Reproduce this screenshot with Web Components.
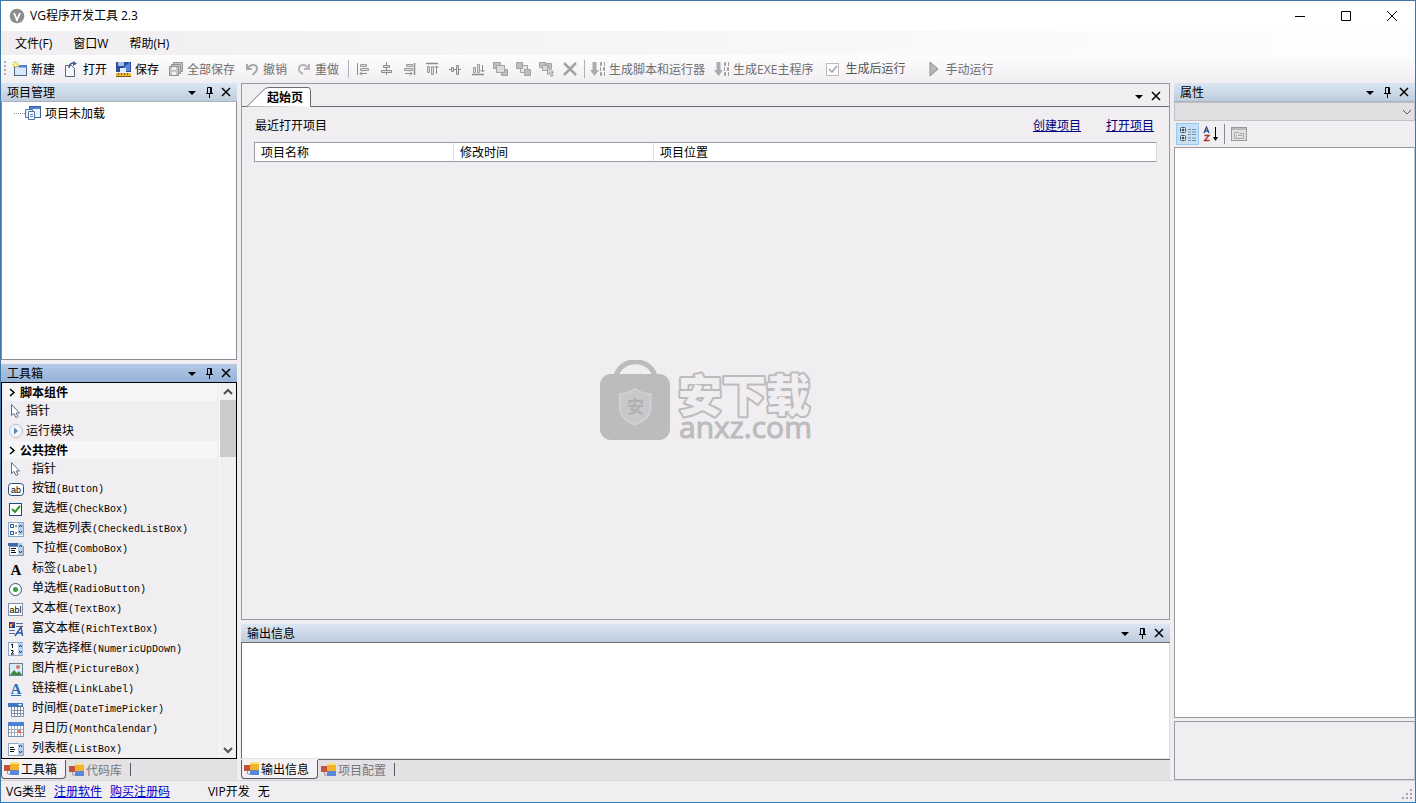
<!DOCTYPE html>
<html lang="zh-CN">
<head>
<meta charset="utf-8">
<title>VG程序开发工具 2.3</title>
<style>
  html, body { margin: 0; height: 100%; }
  body {
    font: 12px/16px "Open Sans", "Noto Sans CJK SC", sans-serif;
    color: #000; background: #f0eef1; overflow: hidden;
  }
</style>
</head>
<body>
<ide-window></ide-window>
<script>
// Shared reset that every shadow root starts from.
const BASE = `<style>
  *, :host { box-sizing: border-box; }
  button { font: inherit; color: inherit; background: none; border: 0; padding: 0; margin: 0; display: flex; align-items: center; white-space: nowrap; }
  a { color: #00007f; }
  ul { list-style: none; margin: 0; padding: 0; }
</style>`;

function define(name, markup) {
  customElements.define(name, class extends HTMLElement {
    constructor() {
      super();
      this.attachShadow({ mode: 'open' });
    }
    connectedCallback() {
      if (this.shadowRoot.childNodes.length) return;
      const template = document.createElement('template');
      template.innerHTML = BASE + (typeof markup === 'function' ? markup(this) : markup);
      this.shadowRoot.append(template.content.cloneNode(true));
    }
  });
}

// Icons, each drawn on a 16 x 16 grid.
const spin = '<rect x="10" y="2" width="5" height="12" fill="#b9cdec"/><path d="M11 6l1.5-2L14 6M11 10l1.5 2L14 10" fill="none" stroke="#1c3a66"/>';
const ICONS = {
  logo: '<circle cx="8" cy="8" r="7.3" fill="#8d8d8d"/><path d="M5 5l3 7 3-7" fill="none" stroke="#fff" stroke-width="1.8"/>',
  'new': '<rect x="2.500" y="5.500" width="12" height="9" fill="#dbe8fa" stroke="#4a6487"/><rect x="7" y="4" width="8" height="2.500" fill="#4c82d6"/><path d="M3.500 0v7M0 3.500h7M1 1l5 5M6 1L1 6" stroke="#f1cf3a" stroke-width="1.2"/><circle cx="3.500" cy="3.500" r="1.500" fill="#fff6b8"/>',
  open: '<path d="M1.500 4.500h6l3 3v8h-9z" fill="#f4f8fd" stroke="#56677f"/><path d="M5 7c0-4 2-5 5-5" fill="none" stroke="#41618f" stroke-width="1.500"/><path d="M9 0l4 2.500L9 5z" fill="#41618f"/>',
  save: '<rect x="0" y="1" width="15" height="10" fill="#274c9c"/><path d="M2 1h6v4H2z" fill="#9fc0ec"/><path d="M8 6l6-5v9H6z" fill="#5b86d8"/><path d="M4 7h6v4H4z" fill="#dfe8f6"/><rect x="0" y="12" width="15" height="3.500" fill="#e9b83a"/><path d="M2.500 12v2M5.500 12v2M8.500 12v2M11.500 12v2M0 15.500h15" stroke="#80600e"/>',
  saveall: '<g fill="#c6c5c7" stroke="#929193"><path d="M5.500 1.500h9v9h-9z"/><path d="M3.500 3.500h9v9h-9z"/><path d="M1.500 5.500h9v9h-9z"/></g><path d="M4 6h4v3H4zM4 11h4v3H4z" fill="#efeff0"/>',
  undo: '<path d="M3 3v5h5M3.500 7.500C6 3 12 3 13 6.500 13.500 9.500 11 12 8.500 14" fill="none" stroke="#a9a8aa" stroke-width="2"/>',
  redo: '<path d="M13 3v5H8M12.500 7.500C10 3 4 3 3 7c-.5 3 2 5 4 6" fill="none" stroke="#b5b4b6" stroke-width="2"/>',
  aleft: '<path d="M2.500 2v12" stroke="#8b8a8c"/><path d="M5.500 3.500h6v2h-6zM5.500 7.500h8v2h-8z" fill="#dedde0" stroke="#9b9a9c"/><path d="M12 12.500H5M7 10.500l-2 2 2 2" fill="none" stroke="#8b8a8c"/>',
  acenter: '<path d="M8.500 1v13" stroke="#8b8a8c"/><path d="M5.500 4.500h6v2h-6zM3.500 9.500h10v2h-10z" fill="#dedde0" stroke="#8b8a8c"/>',
  aright: '<path d="M13.500 2v12" stroke="#8b8a8c" stroke-width="1.500"/><path d="M5.500 3.500h6v2h-6zM3.500 7.500h8v2h-8z" fill="#dedde0" stroke="#9b9a9c"/><path d="M4 12.500h7M9 10.500l2 2-2 2" fill="none" stroke="#8b8a8c"/>',
  atop: '<path d="M2 2.500h12" stroke="#8b8a8c" stroke-width="1.500"/><path d="M3.500 5.500h2v6h-2zM7.500 5.500h2v8h-2z" fill="#dedde0" stroke="#9b9a9c"/><path d="M12.500 13V5M10.500 7l2-2 2 2" fill="none" stroke="#8b8a8c"/>',
  amiddle: '<path d="M2 8.500h12" stroke="#8b8a8c"/><path d="M4.500 6.500h2v4h-2zM9.500 4.500h2v9h-2z" fill="#dedde0" stroke="#8b8a8c"/>',
  abottom: '<path d="M2 13.500h12" stroke="#8b8a8c" stroke-width="1.500"/><path d="M3.500 6.500h2v5h-2zM7.500 3.500h2v8h-2z" fill="#dedde0" stroke="#9b9a9c"/><path d="M12.500 4v7M10.500 9l2 2 2-2" fill="none" stroke="#8b8a8c"/>',
  front: '<g stroke="#a3a2a4"><path d="M.5 1.500h7v6h-7zM8.500 8.500h6v6h-6z" fill="#bebdbf"/><path d="M3.500 4.500h8v7h-8z" fill="#dcdbdd"/></g>',
  back: '<g stroke="#a3a2a4"><path d="M4.500 4.500h7v7h-7z" fill="#e4e3e5"/><path d="M.5 1.500h6v6h-6zM8.500 8.500h6v6h-6z" fill="#bdbcbe"/></g>',
  pick: '<g stroke="#a3a2a4"><path d="M.5 1.500h6v5h-6zM7.500 2.500h5v5h-5z" fill="#c3c2c4"/><path d="M3.500 4.500h6v5h-6z" fill="#dcdbdd"/><path d="M8.500 5.500v8l2-1.500 1.500 3.500 2-1-1.500-3H15z" fill="#d3d2d4"/></g>',
  del: '<path d="M2 2l12 12M14 2L2 14" stroke="#a3a2a4" stroke-width="2.500"/>',
  build: '<path d="M2.500 1h4v8H9l-4.500 6L0 9h2.500z" fill="#acabad"/><g fill="none" stroke="#9d9c9e"><path d="M10.500 1.500h1v3h-1zM14.500 1v4M10.500 6v4M13.500 6.500h1v3h-1zM10.500 11.500h1v3h-1zM14.500 11v4"/></g>',
  play: '<path d="M4 1l8 7-8 7z" fill="#b7b6b8" stroke="#8d8c8e"/>',
  check: '<path d="M3 6l3 3 5-6" fill="none" stroke="#a2a1a3" stroke-width="1.500"/>',
  tab: '<rect x="0" y="4" width="6" height="6" fill="#c8503f"/><path d="M3.500 10v3H6" fill="none" stroke="#9aa0a8"/><rect x="6" y="1" width="9" height="8" fill="#f0b42a"/><rect x="6" y="9" width="9" height="5" fill="#5a88d6"/><path d="M6 2h9" stroke="#fbe08a" stroke-width="2"/>',
  tree: '<rect x="4.500" y="1.500" width="11" height="11" fill="#eef4fb" stroke="#3c6295"/><path d="M5 3h10" stroke="#4b84d4" stroke-width="2"/><path d="M.5 4.500h7v8h-7z" fill="#e5eefa" stroke="#5574a0"/><path d="M3.500 6.500h6v8h-6z" fill="#f4f8fd" stroke="#5574a0"/><path d="M5 9.500h3M5 11.500h3" stroke="#6087be"/>',
  pointer: '<path d="M3.500 1.500v11l2.500-2 2 4 2-1-2-3.500h3.500z" fill="#fff" stroke="#5b6f8d"/>',
  run: '<circle cx="8" cy="8" r="6.500" fill="#f3f7fc" stroke="#b0bfce"/><path d="M6 4.500l4 3.500-4 3.500z" fill="#5d86af"/>',
  button: '<rect x=".5" y="2.500" width="15" height="12" rx="3" fill="#fff" stroke="#234c74"/><text x="8" y="12" font-size="9" text-anchor="middle" font-family="Liberation Sans">ab</text>',
  checkbox: '<rect x="1.500" y="2.500" width="12" height="12" fill="#fff" stroke="#234c74"/><path d="M4 8l3 3 5-6" fill="none" stroke="#2b9a2b" stroke-width="2"/>',
  checklist: '<rect x=".5" y="1.500" width="15" height="14" fill="#fff" stroke="#8ca6c8"/>' + spin + '<path d="M2.500 3.500h3v3h-3zM2.500 10.500h3v3h-3z" fill="none" stroke="#1f4e8c"/><path d="M7 5h2M7 12h2" stroke="#222"/>',
  combo: '<path d="M0 2h15v3H0z" fill="#3f6bae"/><path d="M1.500 5.500h14v9h-14z" fill="#fff" stroke="#7892b4"/>' + spin + '<path d="M3 7.500h5M3 9.500h4M3 11.500h5" stroke="#111"/>',
  label: '<text x="8" y="14" font-size="15" font-weight="700" text-anchor="middle" font-family="Liberation Serif">A</text>',
  radio: '<circle cx="7.500" cy="8.500" r="6" fill="#fff" stroke="#33587e"/><circle cx="7.500" cy="8.500" r="2.500" fill="#39a03a"/>',
  textbox: '<rect x=".5" y="2.500" width="14" height="12" fill="#fff" stroke="#7d93ae"/><text x="7.500" y="12" font-size="9" text-anchor="middle" font-family="Liberation Sans">abl</text>',
  rich: '<rect x="1" y="1" width="6" height="6" fill="#24409a"/><path d="M4 1h2v3H4z" fill="#d9352a"/><path d="M2 3h2v3H2z" fill="#f2c02c"/><path d="M8 2.500h7M8 5.500h7M1 9.500h6M1 12.500h6" stroke="#56708f"/><path d="M7 15l6-9 1.500 9M9.500 12h5" fill="none" stroke="#2d57a8" stroke-width="1.500"/>',
  numeric: '<rect x=".5" y="1.500" width="14" height="13" fill="#fff" stroke="#8ca6c8"/>' + spin + '<path d="M3 4l1.500-1v4M3 9.500h2v1.500L3 13h3" fill="none" stroke="#111"/>',
  picture: '<rect x="1.500" y="2.500" width="13" height="12" fill="#dcebfa" stroke="#6b7f95"/><circle cx="10" cy="6" r="2" fill="#d7785a"/><path d="M2 14l4-5 3 3 2-2 3 4z" fill="#3a8a3c"/>',
  link: '<text x="8" y="13" font-size="15" font-weight="700" text-anchor="middle" font-family="Liberation Serif" fill="#2b6cb8">A</text><path d="M3 14.500h10" stroke="#2b6cb8"/>',
  date: '<path d="M0 2h15v4H0z" fill="#3f78bd"/><path d="M10 3h4l-2 2z" fill="#fff"/><rect x="3" y="6" width="12" height="10" fill="#fff"/><path d="M3.500 6v9.500h12V6M3 9.500h12M3 12.500h12M6.500 6v9M9.500 6v9M12.500 6v9" fill="none" stroke="#7b91ac"/>',
  month: '<rect x=".5" y="1.500" width="15" height="14" fill="#fff" stroke="#7b91ac"/><path d="M0 1h16v4H0z" fill="#4b82d4"/><path d="M1 8.500h14M1 11.500h14M3.500 5v10M6.500 5v10M9.500 5v10M12.500 5v10" stroke="#9aacc4"/><rect x="10" y="9" width="3" height="3" fill="#e2734e"/>',
  list: '<rect x=".5" y="2.500" width="15" height="12" fill="#fff" stroke="#8ca6c8"/>' + spin + '<path d="M2 6.500h4M2 8.500h5M2 10.500h4" stroke="#111"/>',
  caret: '<path d="M4 7h8l-4 4z" fill="#000"/>',
  pin: '<path d="M6.500 9V3.500h4V9M9.500 4v5M5 9.500h7M8.500 10v4" fill="none" stroke="#000"/>',
  close: '<path d="M4 4l8 8M12 4l-8 8" stroke="#000" stroke-width="1.500"/>',
  winmin: '<path d="M3 8.500h10" stroke="#000"/>',
  winmax: '<path d="M3.500 3.500h9v9h-9z" fill="none" stroke="#000"/>',
  winclose: '<path d="M3 3l10 10M13 3L3 13" stroke="#000"/>',
  right: '<path d="M6 5l4 3.500L6 12" fill="none" stroke="#000" stroke-width="1.500"/>',
  up: '<path d="M4 10l4-4 4 4" fill="none" stroke="#505050" stroke-width="2"/>',
  down: '<path d="M4 6l4 4 4-4" fill="none" stroke="#505050" stroke-width="2"/>',
  chevron: '<path d="M4 6l4 4 4-4" fill="none" stroke="#555"/>',
  category: '<g fill="#fff" stroke="#3b5876"><rect x=".5" y="1.500" width="5" height="5" rx="1"/><rect x=".5" y="9.500" width="5" height="5" rx="1"/></g><path d="M3 2.500v3M1.500 4h3M3 10.500v3M1.500 12h3" stroke="#111"/><path d="M8 3.500h3M12 3.500h4M8 6h3M12 6h4M8 8.500h3M12 8.500h4M8 12h3M12 12h4M8 14.500h3M12 14.500h4" stroke="#7b8ea5"/>',
  sort: '<path d="M1 7l2.500-6L6 7M2 5h3" fill="none" stroke="#2b4f93" stroke-width="1.300"/><path d="M1.500 9.500H6l-4.500 5h5" fill="none" stroke="#a5312c" stroke-width="1.300"/><path d="M12.500 1v12" stroke="#000"/><path d="M10 11h5l-2.500 4z"/>',
  page: '<rect x=".5" y="1.500" width="15" height="13" fill="#e2e1e3" stroke="#979698"/><path d="M1 3h14" stroke="#b9b8ba" stroke-width="2"/><path d="M3.500 6.500h4l1 1h4v5h-9zM5 9.500h1M7 9.500h4M5 11h1" fill="none" stroke="#a5a4a6"/>'
};

define('ide-icon', el => `<style>
    :host { display: block; flex: none; width: 16px; height: 16px; }
    svg { display: block; width: 16px; height: 16px; }
  </style><svg viewBox="0 0 16 16" aria-hidden="true">${ICONS[el.getAttribute('name')]}</svg>`);

define('title-bar', `<style>
    :host { display: flex; align-items: center; height: 30px; padding-left: 8px; background: #fff; }
    span { flex: 1; padding-left: 5px; }
    button { width: 46px; height: 30px; justify-content: center; }
  </style>
  <ide-icon name="logo"></ide-icon><span>VG程序开发工具 2.3</span>
  <button aria-label="最小化"><ide-icon name="winmin"></ide-icon></button>
  <button aria-label="最大化"><ide-icon name="winmax"></ide-icon></button>
  <button aria-label="关闭"><ide-icon name="winclose"></ide-icon></button>`);

define('menu-bar', `<style>
    :host { display: flex; gap: 1px; height: 24px; padding: 2px 4px 0; background: linear-gradient(90deg, #f0eef1, #fdfcfe 90%); }
    button { padding: 0 10px; }
  </style><button>文件(F)</button><button>窗口W</button><button>帮助(H)</button>`);

define('tool-button', el => `<style>
    :host { display: block; }
    button { height: 24px; gap: 3px; padding: 0 5px 0 4px; }
    span { padding-top: 2px; }
    :host([compact]) button { padding: 0 3px 0 4px; gap: 0; }
    button:disabled { color: #6f6e70; }
  </style><button ${el.hasAttribute('disabled') ? 'disabled' : ''} aria-label="${el.getAttribute('label') || el.textContent}">
    <ide-icon name="${el.getAttribute('icon')}"></ide-icon><span><slot></slot></span></button>`);

const ALIGN = [['aleft', '左对齐'], ['acenter', '居中对齐'], ['aright', '右对齐'], ['atop', '顶端对齐'], ['amiddle', '中间对齐'],
  ['abottom', '底端对齐'], ['front', '置于顶层'], ['back', '置于底层'], ['pick', '选择'], ['del', '删除']];

define('tool-bar', `<style>
    :host { display: flex; align-items: center; height: 28px; padding-left: 3px; background: linear-gradient(#fefdfe, #f0eef1); }
    .grip { width: 2px; height: 16px; margin-right: 2px; background: repeating-linear-gradient(#b2b0b4 0 2px, transparent 2px 4px); }
    .sep { width: 1px; height: 18px; background: #b1b0b3; margin: 0 2px 0 4px; }
    .sep.wide { margin: 0 1px 0 3px; }
    label { display: flex; align-items: center; gap: 6px; padding: 0 17px 0 8px; color: #555; }
    .box { display: grid; width: 13px; height: 13px; }
    .box > * { grid-area: 1 / 1; }
    input { appearance: none; width: 13px; height: 13px; margin: 0; border: 1px solid #bcbbbd; background: #fcfbfd; }
    .box ide-icon { width: 13px; height: 13px; overflow: hidden; }
  </style>
  <span class="grip"></span>
  <tool-button icon="new">新建</tool-button>
  <tool-button icon="open">打开</tool-button>
  <tool-button icon="save">保存</tool-button>
  <tool-button icon="saveall" disabled>全部保存</tool-button>
  <tool-button icon="undo" disabled>撤销</tool-button>
  <tool-button icon="redo" disabled>重做</tool-button>
  <span class="sep"></span>
  ${ALIGN.map(([icon, label]) => `<tool-button compact disabled icon="${icon}" label="${label}"></tool-button>`).join('')}
  <span class="sep wide"></span>
  <tool-button icon="build" disabled>生成脚本和运行器</tool-button>
  <tool-button icon="build" disabled>生成EXE主程序</tool-button>
  <label><span class="box"><input type="checkbox" checked disabled><ide-icon name="check"></ide-icon></span>生成后运行</label>
  <tool-button icon="play" disabled>手动运行</tool-button>`);

// Docked panel: a caption with its three controls, a body, and optional tabs below.
define('dock-panel', el => `<style>
    :host { display: flex; flex-direction: column; min-height: 0; min-width: 0; --edge: #8e8c96; }
    :host([active]) { --edge: #000; }
    header { display: flex; align-items: center; flex: none; height: 19px; padding: 0 3px 0 6px; background: linear-gradient(#dae6f3, #bfccdc); border-bottom: 1px solid #a9b3c0; }
    :host([active]) header { background: linear-gradient(#b3c9e6, #95b1d5); border-color: #000; }
    :host([sunken]) header { border-color: #6d6a70; }
    h2 { flex: 1; margin: 0; padding-top: 2px; font: inherit; }
    header button { width: 17px; height: 18px; justify-content: center; }
    .body { flex: 1; min-height: 0; display: flex; flex-direction: column; border: 1px solid var(--edge); border-top: 0; background: #fff; }
    :host([active]) .body { background: #f0eef1; }
    :host([sunken]) .body { border-color: #fff #dedce0 #e4e2e5 #6d6a70; }
    :host([plain]) .body { border: 0; background: none; }
  </style>
  <header><h2>${el.getAttribute('heading')}</h2>
    <button aria-label="菜单"><ide-icon name="caret"></ide-icon></button>
    <button aria-label="自动隐藏"><ide-icon name="pin"></ide-icon></button>
    <button aria-label="关闭"><ide-icon name="close"></ide-icon></button></header>
  <div class="body"><slot></slot></div><slot name="tabs"></slot>`);

define('dock-tabs', el => {
  const [first, second] = el.getAttribute('labels').split(',');
  return `<style>
    :host { display: flex; align-items: flex-start; flex: none; height: 21px; background: #e3e1e4; border-top: 1px solid #6d6a70; }
    :host([flush]) { border-top: 0; padding-top: 1px; }
    button { height: 19px; gap: 1px; padding: 0 8px 0 3px; color: #77757a; }
    span { padding-top: 2px; }
    .on { color: #000; background: #f3f1f4; border: solid #5c5a60; border-width: 0 1px 1px 1px; border-radius: 0 0 4px 4px; padding-left: 2px; box-shadow: 0 -1px #f3f1f4; }
    i { width: 1px; height: 13px; margin-top: 3px; background: #5c5a60; }
  </style><button class="on"><ide-icon name="tab"></ide-icon><span>${first}</span></button>
  <button><ide-icon name="tab"></ide-icon><span>${second}</span></button><i></i>`;
});

define('project-tree', `<style>
    :host { display: block; padding: 2px 0 0 12px; }
    li { display: flex; align-items: center; height: 18px; }
    .line { width: 11px; border-top: 1px dotted #8a8a8a; }
    ide-icon { margin-right: 4px; }
    .name { padding-top: 2px; }
  </style><ul><li><span class="line"></span><ide-icon name="tree"></ide-icon><span class="name">项目未加载</span></li></ul>`);

const TOOLS = [['pointer', '指针', ''], ['button', '按钮', 'Button'], ['checkbox', '复选框', 'CheckBox'], ['checklist', '复选框列表', 'CheckedListBox'],
  ['combo', '下拉框', 'ComboBox'], ['label', '标签', 'Label'], ['radio', '单选框', 'RadioButton'], ['textbox', '文本框', 'TextBox'],
  ['rich', '富文本框', 'RichTextBox'], ['numeric', '数字选择框', 'NumericUpDown'], ['picture', '图片框', 'PictureBox'], ['link', '链接框', 'LinkLabel'],
  ['date', '时间框', 'DateTimePicker'], ['month', '月日历', 'MonthCalendar'], ['list', '列表框', 'ListBox']];

define('tool-box', `<style>
    :host { display: flex; flex: 1; min-height: 0; }
    .list { flex: 1; min-width: 0; overflow: hidden; }
    h3 { display: flex; align-items: center; height: 18px; margin: 0 2px; font: inherit; font-weight: 700; background: #f6f5f7; }
    h3 span { padding-top: 2px; }
    li button { width: 100%; height: 20px; padding-left: 6px; gap: 2px; }
    .inset button { gap: 8px; }
    code { font: 10px/16px "Liberation Mono", monospace; }
    .scroll { flex: none; width: 17px; display: flex; flex-direction: column; padding-top: 1px; background: #f1eff2; border-left: 1px solid #f9f8fa; }
    .thumb { height: 57px; background: #cdcbce; }
    .gap { flex: 1; }
  </style>
  <div class="list">
    <h3><ide-icon name="right"></ide-icon><span>脚本组件</span></h3>
    <ul><li><button><ide-icon name="pointer"></ide-icon>指针</button></li><li><button><ide-icon name="run"></ide-icon>运行模块</button></li></ul>
    <h3><ide-icon name="right"></ide-icon><span>公共控件</span></h3>
    <ul class="inset">${TOOLS.map(([icon, zh, en]) => `<li><button><ide-icon name="${icon}"></ide-icon><span>${zh}${en && `<code>(${en})</code>`}</span></button></li>`).join('')}</ul>
  </div>
  <div class="scroll"><ide-icon name="up"></ide-icon><div class="thumb"></div><div class="gap"></div><ide-icon name="down"></ide-icon></div>`);

define('start-page', `<style>
    :host { display: flex; flex-direction: column; min-height: 0; border: 1px solid #9b999f; background: #f0eef1; }
    .tabs { display: flex; align-items: flex-end; height: 23px; padding: 0 5px; border-bottom: 1px solid #6d6a70; }
    .tab { display: grid; width: 64px; height: 20px; margin-bottom: -1px; font-weight: 700; }
    .tab > * { grid-area: 1 / 1; }
    .tab span { align-self: center; text-align: left; padding: 2px 0 0 20px; z-index: 1; }
    .tab svg { display: block; }
    .tabs .icon { width: 17px; height: 20px; justify-content: center; }
    .space { flex: 1; }
    .content { padding: 11px 12px 0; }
    .row { display: flex; gap: 25px; padding: 0 3px 0 1px; margin-bottom: 8px; }
    .row span { flex: 1; }
    table { width: 100%; height: 20px; table-layout: fixed; border-collapse: separate; border-spacing: 0; background: #fff; border: 1px solid #9b999f; border-right-color: #dcdadd; }
    th { font-weight: 400; text-align: left; padding: 2px 6px 0; border-right: 1px solid #e2e0e3; }
    th:last-child { border: 0; }
    .name { width: 199px; }
    .time { width: 200px; }
  </style>
  <div class="tabs">
    <button class="tab"><span>起始页</span><svg width="64" height="20" viewBox="0 0 64 20"><path d="M0 19.500L16 3.500Q18.500.5 22 .5H61Q63.500.5 63.500 3.500V20" fill="#fff" stroke="#6d6a70"/></svg></button>
    <span class="space"></span>
    <button class="icon" aria-label="菜单"><ide-icon name="caret"></ide-icon></button>
    <button class="icon" aria-label="关闭"><ide-icon name="close"></ide-icon></button>
  </div>
  <div class="content">
    <div class="row"><span>最近打开项目</span><a href="#new">创建项目</a><a href="#open">打开项目</a></div>
    <table><thead><tr><th class="name">项目名称</th><th class="time">修改时间</th><th>项目位置</th></tr></thead></table>
  </div>`);

define('property-grid', `<style>
    :host { display: flex; flex: 1; flex-direction: column; min-height: 0; }
    .pick { display: grid; height: 19px; }
    .pick > * { grid-area: 1 / 1; }
    select { appearance: none; width: 100%; height: 19px; margin: 0; padding: 0; border: 1px solid #c3c1c5; border-radius: 0; background: #e1dfe2; opacity: 1; }
    .pick ide-icon { justify-self: end; align-self: center; z-index: 1; }
    .bar { display: flex; align-items: center; height: 26px; padding-left: 2px; }
    .bar button { width: 23px; height: 22px; justify-content: center; }
    .bar .on { background: #c5dff5; border: 1px solid #98c8f0; }
    .bar i { width: 1px; height: 20px; margin: 0 2px; background: #8b898d; }
    .grid { flex: 1; border: 1px solid #9b999f; border-right-color: #b9c6d3; background: #fff; }
    .help { height: 59px; margin-top: 3px; border: 1px solid #9b999f; border-right-color: #b9c6d3; }
  </style>
  <div class="pick"><select disabled aria-label="对象"></select><ide-icon name="chevron"></ide-icon></div>
  <div class="bar"><button class="on" aria-label="按分类排序"><ide-icon name="category"></ide-icon></button>
    <button aria-label="按字母排序"><ide-icon name="sort"></ide-icon></button><i></i>
    <button disabled aria-label="属性页"><ide-icon name="page"></ide-icon></button></div>
  <div class="grid"></div><div class="help"></div>`);

define('status-bar', `<style>
    :host { display: flex; align-items: center; gap: 8px; height: 22px; padding-left: 5px; border-top: 1px solid #d7d5d8; background: #f0eef1; }
    a { color: #0000d0; }
    .vip { margin-left: 30px; }
    .room { flex: 1; }
    svg { align-self: flex-end; }
  </style><span>VG类型</span><a href="#register">注册软件</a><a href="#buy">购买注册码</a><span class="vip">VIP开发</span><span>无</span>
  <span class="room"></span>
  <svg width="14" height="14" viewBox="0 0 14 14"><path d="M9 1h2v2H9zM5 5h2v2H5zM9 5h2v2H9zM1 9h2v2H1zM5 9h2v2H5zM9 9h2v2H9z" fill="#a5a3a7"/></svg>`);

define('water-mark', `<style>
    :host { display: block; }
    svg { display: block; font-family: "Open Sans", "Noto Sans CJK SC", sans-serif; }
    .big { font: 900 44px "Noto Sans CJK SC", sans-serif; fill: #f0eef1; stroke: #bcbbbd; stroke-width: 4px; stroke-linejoin: round; paint-order: stroke; }
    .site { font-size: 30px; fill: #bcbbbd; stroke: #bcbbbd; stroke-width: 1px; }
  </style><svg width="220" height="83" viewBox="0 0 220 83">
    <path d="M18 16C23 -3 52 -3 57 16" fill="none" stroke="#bcbbbd" stroke-width="5"/>
    <rect x="2" y="14" width="70" height="66" rx="11" fill="#bcbbbd"/>
    <path d="M37 29Q45 34 52.500 34V48Q52 59 37 64.500Q22 59 22 48V34Q30 34 37 29z" fill="#c8c7c9" stroke="#d0cfd1" stroke-width="2"/>
    <text x="37.500" y="53" text-anchor="middle" font-size="17" font-weight="700" fill="#b1b0b2">安</text>
    <text class="big" x="80" y="52">安下载</text>
    <text class="site" x="81" y="78">anxz.com</text>
  </svg>`);

define('ide-window', `<style>
    :host { display: flex; flex-direction: column; position: relative; height: 100vh; min-height: 480px; border: 1px solid #3f78a6; border-bottom-color: #2b7fc4; background: #f0eef1; }
    main { flex: 1; min-height: 0; display: grid; grid-template-columns: 236px minmax(0, 1fr) 241px; gap: 4px; }
    main > * { min-height: 0; min-width: 0; }
    .left { display: grid; grid-template-rows: minmax(0, 2fr) minmax(0, 3fr); gap: 4px; }
    .centre { display: grid; grid-template-rows: minmax(0, 1fr) 156px; gap: 4px; }
    .overlay { position: absolute; inset: 0; display: grid; place-items: center; pointer-events: none; }
  </style>
  <title-bar></title-bar><menu-bar></menu-bar><tool-bar></tool-bar>
  <main>
    <div class="left">
      <dock-panel heading="项目管理"><project-tree></project-tree></dock-panel>
      <dock-panel heading="工具箱" active><tool-box></tool-box><dock-tabs slot="tabs" flush labels="工具箱,代码库"></dock-tabs></dock-panel>
    </div>
    <div class="centre">
      <start-page></start-page>
      <dock-panel heading="输出信息" sunken><dock-tabs slot="tabs" labels="输出信息,项目配置"></dock-tabs></dock-panel>
    </div>
    <dock-panel heading="属性" plain><property-grid></property-grid></dock-panel>
  </main>
  <status-bar></status-bar>
  <div class="overlay"><water-mark></water-mark></div>`);
</script>
</body>
</html>
